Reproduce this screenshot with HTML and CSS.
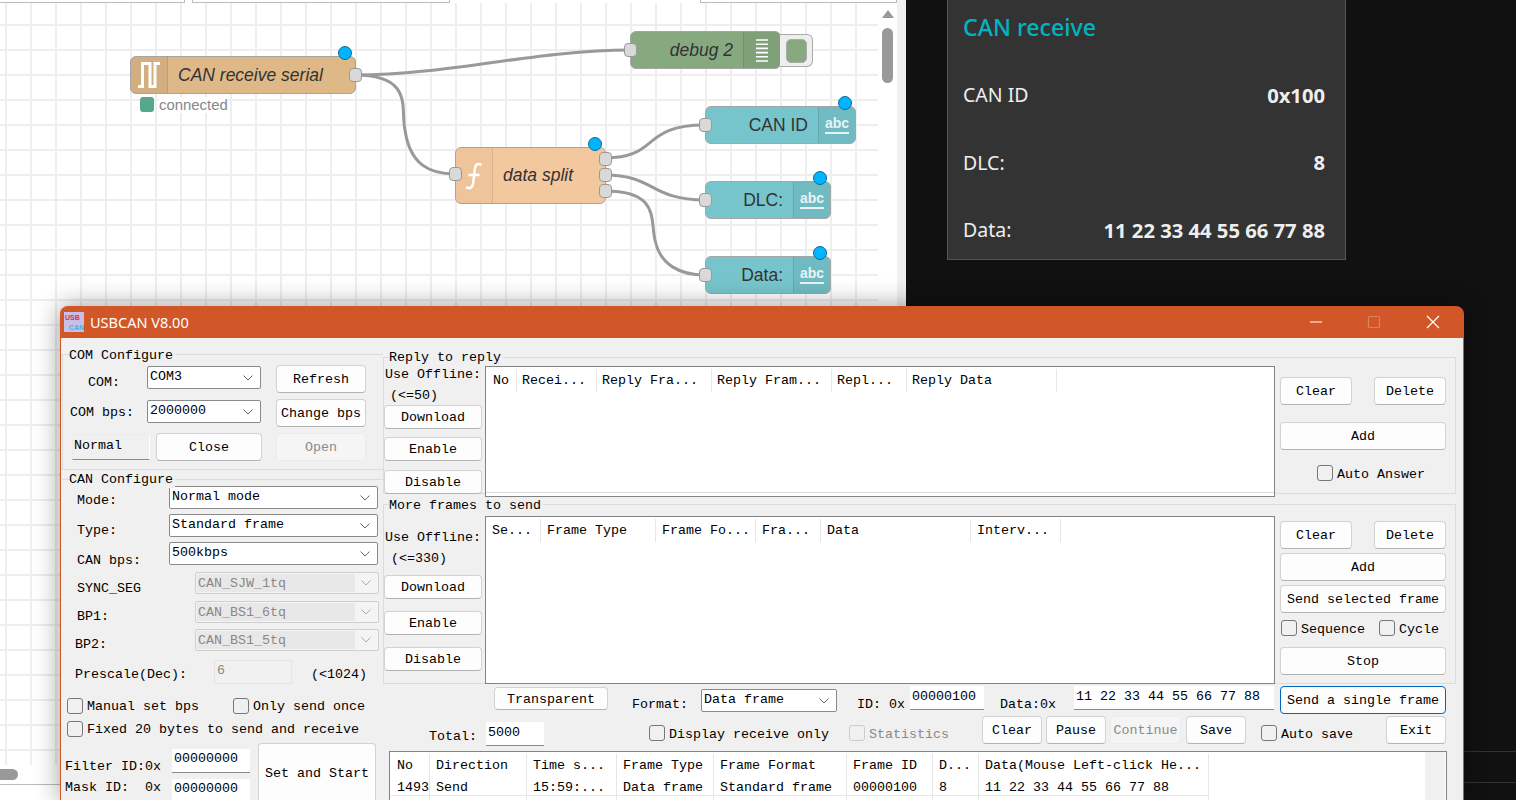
FILE: index.html
```html
<!DOCTYPE html>
<html lang="en">
<head>
<meta charset="utf-8">
<title>USBCAN V8.00</title>
<link rel="stylesheet" href="styles.css">
</head>
<body>
<div class="desktop">

  <div class="browser">
    <div class="tabs"><span class="tab tab-0"></span><span class="tab tab-a"></span><span class="tab tab-b"></span></div>
    <div class="canvas"></div>
    <svg class="wires" width="897" height="320" viewBox="0 0 897 320">
      <path d="M355 75C450 75 535 50 630 50"/>
      <path d="M355 75C415 75 400 110 405 130C410 165 430 174 455 174"/>
      <path d="M605 158C660 158 640 125 705 125"/>
      <path d="M605 175C655 175 650 200 705 200"/>
      <path d="M605 191C660 191 650 220 655 240C660 265 680 275 705 275"/>
    </svg>

    <div class="node n-serial">
      <div class="n-icon n-icon-l">
        <svg width="24" height="26" viewBox="0 0 24 26"><path class="ico ico-bold" d="M1 24.500h4.500V1.500h7.500v23h5V1.500H23"/></svg>
      </div>
      <div class="n-label it">CAN receive serial</div>
      <i class="port port-out"></i><i class="dot"></i>
    </div>
    <div class="status"><i class="status-box"></i><span class="status-text">connected</span></div>

    <div class="node n-func">
      <div class="n-icon n-icon-l">
        <svg width="18" height="28" viewBox="0 0 18 28"><path class="ico" d="M16.500 3C12.500 .8 10.500 2.500 9.900 6.500L8.100 21.500C7.500 25.500 5 27 1 25.500M3.500 13h11"/></svg>
      </div>
      <div class="n-label it">data split</div>
      <i class="port port-in"></i>
      <i class="port port-o1"></i><i class="port port-o2"></i><i class="port port-o3"></i><i class="dot"></i>
    </div>

    <div class="node n-debug">
      <div class="n-label it n-end">debug 2</div>
      <div class="n-icon n-icon-r">
        <svg width="14" height="24" viewBox="0 0 14 24"><path class="ico thin" d="M1 2h12M1 6.200h12M1 10.400h12M1 14.600h12M1 18.800h12M1 23h12"/></svg>
      </div>
      <i class="port port-in"></i>
      <div class="debug-btn"><i class="debug-inner"></i></div>
    </div>

    <div class="node n-text n-canid">
      <div class="n-label n-end">CAN ID</div>
      <div class="n-icon n-icon-r"><span class="abc">abc</span></div>
      <i class="port port-in"></i><i class="dot"></i>
    </div>
    <div class="node n-text n-dlc">
      <div class="n-label n-end">DLC:</div>
      <div class="n-icon n-icon-r"><span class="abc">abc</span></div>
      <i class="port port-in"></i><i class="dot"></i>
    </div>
    <div class="node n-text n-data">
      <div class="n-label n-end">Data:</div>
      <div class="n-icon n-icon-r"><span class="abc">abc</span></div>
      <i class="port port-in"></i><i class="dot"></i>
    </div>

    <div class="vscroll">
      <svg width="14" height="10" viewBox="0 0 14 10"><path d="M7 1l6 8H1z"/></svg>
      <i class="vthumb"></i>
    </div>
    <div class="hscroll"><i class="hthumb"></i></div>
  </div>

  <div class="dash">
    <div class="dash-title">CAN receive</div>
    <div class="dash-row dash-first"><span>CAN ID</span><b>0x100</b></div>
    <div class="dash-row"><span>DLC:</span><b>8</b></div>
    <div class="dash-row"><span>Data:</span><b>11 22 33 44 55 66 77 88</b></div>
  </div>

  <i class="dark-line dl-1"></i><i class="dark-line dl-2"></i>

  <div class="win">
    <div class="titlebar">
      <div class="app-icon"><span class="ai-usb">USB</span><span class="ai-can">CAN</span></div>
      <div class="app-title">USBCAN V8.00</div>
      <svg class="tb-ctl tb-min" width="14" height="14" viewBox="0 0 14 14"><path d="M1 7h12"/></svg>
      <svg class="tb-ctl tb-max" width="14" height="14" viewBox="0 0 14 14"><rect x="1.500" y="1.500" width="11" height="11" rx="1"/></svg>
      <svg class="tb-ctl tb-close" width="14" height="14" viewBox="0 0 14 14"><path d="M1 1l12 12M13 1L1 13"/></svg>
    </div>

    <div class="win-body">

      <div class="left">
        <section class="grp com-grp">
          <div class="legend">COM Configure</div>
          <div class="row com-row">
            <div class="lbl com-lbl dn3">COM:</div>
            <div class="combo w114"><span>COM3</span><svg class="chev" viewBox="0 0 10 6"><path d="M.5.500 5 5 9.500.500"/></svg></div>
            <button class="btn w90 h28 ml15">Refresh</button>
          </div>
          <div class="row com-row">
            <div class="lbl com-lbl2">COM bps:</div>
            <div class="combo w114"><span>2000000</span><svg class="chev" viewBox="0 0 10 6"><path d="M.5.500 5 5 9.500.500"/></svg></div>
            <button class="btn w90 h28 ml15">Change bps</button>
          </div>
          <div class="row com-row">
            <div class="normal">Normal</div>
            <button class="btn close-btn h28">Close</button>
            <button class="btn w90 h28 dis ml14">Open</button>
          </div>
        </section>

        <section class="can-grp">
          <div class="legend">CAN Configure</div>
          <div class="can-grid">
            <div class="lbl can-lbl">Mode:</div>
            <div class="combo wide"><span>Normal mode</span><svg class="chev" viewBox="0 0 10 6"><path d="M.5.500 5 5 9.500.500"/></svg></div>
            <div class="lbl can-lbl dn2">Type:</div>
            <div class="combo wide"><span>Standard frame</span><svg class="chev" viewBox="0 0 10 6"><path d="M.5.500 5 5 9.500.500"/></svg></div>
            <div class="lbl can-lbl dn4">CAN bps:</div>
            <div class="combo wide"><span>500kbps</span><svg class="chev" viewBox="0 0 10 6"><path d="M.5.500 5 5 9.500.500"/></svg></div>
            <div class="lbl can-lbl dn2">SYNC_SEG</div>
            <div class="combo narrow"><span>CAN_SJW_1tq</span><svg class="chev" viewBox="0 0 10 6"><path d="M.5.500 5 5 9.500.500"/></svg></div>
            <div class="lbl can-lbl dn1">BP1:</div>
            <div class="combo narrow"><span>CAN_BS1_6tq</span><svg class="chev" viewBox="0 0 10 6"><path d="M.5.500 5 5 9.500.500"/></svg></div>
            <div class="lbl can-lbl can-lbl2 dn1">BP2:</div>
            <div class="combo narrow"><span>CAN_BS1_5tq</span><svg class="chev" viewBox="0 0 10 6"><path d="M.5.500 5 5 9.500.500"/></svg></div>
            <div class="presc">
              <div class="lbl presc-lbl">Prescale(Dec):</div>
              <div class="input presc-in dis-in">6</div>
              <div class="lbl presc-max">(&lt;1024)</div>
            </div>
          </div>
        </section>

        <div class="chk-row chk-first">
          <i class="cb"></i><span class="cb-l">Manual set bps</span>
          <i class="cb ml34"></i><span class="cb-l">Only send once</span>
        </div>
        <div class="chk-row chk-second">
          <i class="cb"></i><span class="cb-l">Fixed 20 bytes to send and receive</span>
        </div>

        <div class="filter">
          <div class="filter-lbls">
            <div class="lbl">Filter ID:0x</div>
            <div class="lbl mask-lbl">Mask ID:&nbsp;&nbsp;0x</div>
          </div>
          <div class="filter-ins">
            <div class="input filter-in">00000000</div>
            <div class="input filter-in">00000000</div>
          </div>
          <button class="btn start-btn">Set and Start</button>
        </div>
      </div>

      <div class="main">
        <section class="rgrp reply-grp">
          <div class="legend">Reply to reply</div>
          <div class="tools tools-a">
            <div class="lbl off1">Use Offline:</div>
            <div class="lbl off2">(&lt;=50)</div>
            <button class="btn tool mt2">Download</button>
            <button class="btn tool mt8">Enable</button>
            <button class="btn tool mt9">Disable</button>
          </div>
          <div class="tbl tbl-a">
            <div class="thead cols-a">
              <div class="hc hc-first">No</div><div class="hc">Recei...</div><div class="hc">Reply Fra...</div><div class="hc">Reply Fram...</div><div class="hc">Repl...</div><div class="hc">Reply Data</div>
            </div>
          </div>
          <div class="acts acts-a">
            <div class="pair"><button class="btn w72 h28">Clear</button><button class="btn w72 h28">Delete</button></div>
            <button class="btn full mt17">Add</button>
            <div class="chk-row auto-ans"><i class="cb"></i><span class="cb-l">Auto Answer</span></div>
          </div>
        </section>

        <section class="rgrp more-grp">
          <div class="legend legend-more">More frames to send</div>
          <div class="tools tools-b">
            <div class="lbl off1">Use Offline:</div>
            <div class="lbl off2 off2b">(&lt;=330)</div>
            <button class="btn tool mt9">Download</button>
            <button class="btn tool mt12">Enable</button>
            <button class="btn tool mt12">Disable</button>
          </div>
          <div class="tbl tbl-b">
            <div class="thead cols-b">
              <div class="hc hc-first">Se...</div><div class="hc">Frame Type</div><div class="hc">Frame Fo...</div><div class="hc">Fra...</div><div class="hc">Data</div><div class="hc">Interv...</div>
            </div>
          </div>
          <div class="acts acts-b">
            <div class="pair"><button class="btn w72 h28">Clear</button><button class="btn w72 h28">Delete</button></div>
            <button class="btn full mt4">Add</button>
            <button class="btn full mt4">Send selected frame</button>
            <div class="chk-row seq-row"><i class="cb"></i><span class="cb-l">Sequence</span><i class="cb ml14b"></i><span class="cb-l">Cycle</span></div>
            <button class="btn full mt11">Stop</button>
          </div>
        </section>

        <div class="ctl-row ctl-a">
          <button class="btn transp">Transparent</button>
          <div class="lbl fmt-lbl">Format:</div>
          <div class="combo fmt-combo"><span>Data frame</span><svg class="chev" viewBox="0 0 10 6"><path d="M.5.500 5 5 9.500.500"/></svg></div>
          <div class="lbl id-lbl">ID: 0x</div>
          <div class="input id-in">00000100</div>
          <div class="lbl data-lbl">Data:0x</div>
          <div class="input data-in">11 22 33 44 55 66 77 88</div>
          <button class="btn send-one">Send a single frame</button>
        </div>

        <div class="ctl-row ctl-b">
          <div class="lbl total-lbl">Total:</div>
          <div class="input total-in">5000</div>
          <div class="chk-inline disp"><i class="cb"></i><span class="cb-l">Display receive only</span></div>
          <div class="chk-inline stat"><i class="cb cb-dis"></i><span class="cb-l gray">Statistics</span></div>
          <button class="btn w60 h28 ml33">Clear</button>
          <button class="btn w60 h28 ml4">Pause</button>
          <button class="btn w71 h28 ml4 dis">Continue</button>
          <button class="btn w60 h28 ml5">Save</button>
          <div class="chk-inline autosave"><i class="cb"></i><span class="cb-l">Auto save</span></div>
          <button class="btn w60 h28 ml33">Exit</button>
        </div>

        <div class="log">
          <div class="log-main">
            <div class="thead cols-c">
              <div class="hc hc-first">No</div><div class="hc">Direction</div><div class="hc">Time s...</div><div class="hc">Frame Type</div><div class="hc">Frame Format</div><div class="hc">Frame ID</div><div class="hc">D...</div><div class="hc">Data(Mouse Left-click He...</div>
            </div>
            <div class="trow cols-c">
              <div class="tc hc-first">1493</div><div class="tc">Send</div><div class="tc">15:59:...</div><div class="tc">Data frame</div><div class="tc">Standard frame</div><div class="tc">00000100</div><div class="tc">8</div><div class="tc">11 22 33 44 55 66 77 88</div>
            </div>
            <div class="trow cols-c">
              <div class="tc"></div><div class="tc"></div><div class="tc"></div><div class="tc"></div><div class="tc"></div><div class="tc"></div><div class="tc"></div><div class="tc"></div>
            </div>
          </div>
          <div class="log-scroll"></div>
        </div>
      </div>
    </div>
  </div>
</div>
</body>
</html>
```

FILE: styles.css
```css
* { box-sizing: border-box; }
html, body { margin: 0; padding: 0; }
body { width: 1516px; height: 800px; overflow: hidden; background: #111; }
i { display: block; font-style: normal; }

.desktop { position: relative; width: 1516px; height: 800px; overflow: hidden; background: #111; }

/* ---------- Browser with flow editor ---------- */
.browser { position: absolute; left: 0; top: 0; width: 906px; height: 800px; background: #fff; border-right: 9px solid #f0f0f0; font-family: "Liberation Sans", Arial, sans-serif; }
.tabs { display: flex; height: 3px; }
.tab { display: block; height: 3px; background: #fff; border: 1px solid #bbb; border-top: 0; }
.tab-0 { width: 185px; border-left: 0; }
.tab-a { margin-left: 7px; width: 258px; }
.tab-b { margin-left: 250px; width: 197px; }
.canvas { position: absolute; left: 0; top: 3px; width: 878px; height: 762px; background-color: #fff; background-image: linear-gradient(#eee 2px, transparent 2px), linear-gradient(90deg, #eee 2px, transparent 2px); background-size: 25px 25px; background-position: 5px 21px; }
.wires { position: absolute; left: 0; top: 0; }
.wires path { fill: none; stroke: #999; stroke-width: 3; }

.node { position: absolute; display: flex; height: 38px; border: 1px solid #a5a5a5; border-radius: 6px; color: #333; font-size: 17.500px; }
.n-serial { left: 130px; top: 56px; width: 226px; background: #deb887; }
.n-func { left: 455px; top: 147px; width: 151px; height: 57px; background: #f4c89e; }
.n-debug { left: 630px; top: 31px; width: 151px; background: #87a980; }
.n-text { background: #77c5cc; }
.n-canid { left: 705px; top: 106px; width: 151px; }
.n-dlc { left: 705px; top: 181px; width: 126px; }
.n-data { left: 705px; top: 256px; width: 126px; }

.n-icon { display: flex; align-items: center; justify-content: center; flex: none; width: 37px; background: rgba(0,0,0,.05); }
.n-func .n-icon { background: rgba(0,0,0,.015); }
.n-icon-l { border-right: 1px solid rgba(0,0,0,.1); border-radius: 5px 0 0 5px; }
.n-icon-r { border-left: 1px solid rgba(0,0,0,.1); border-radius: 0 5px 5px 0; }
.n-label { flex: 1; padding-left: 10px; line-height: 36px; white-space: nowrap; }
.n-func .n-label { line-height: 55px; }
.n-label.n-end { text-align: right; padding: 0 10px 0 0; }
.it { font-style: italic; }
.ico { fill: none; stroke: #fff; stroke-width: 2.500; }
.ico-bold { stroke-width: 3; }
.ico.thin { stroke-width: 1.600; }
.abc { display: block; font-size: 14px; font-weight: bold; line-height: 14px; color: #e6f4f5; border-bottom: 2px solid #e6f4f5; padding: 0 0 2px; }

.port { position: absolute; width: 13px; height: 14px; background: #d9d9d9; border: 1px solid #999; border-radius: 4px; }
.port-out { right: -7px; top: 11px; }
.port-in { left: -7px; top: 11px; }
.n-func .port-in { top: 19px; }
.port-o1 { right: -7px; top: 4px; }
.port-o2 { right: -7px; top: 20px; }
.port-o3 { right: -7px; top: 36px; }
.dot { position: absolute; right: 3px; top: -11px; width: 14px; height: 14px; border-radius: 50%; background: #00b4ff; border: 1px solid #0a6c99; }

.debug-btn { position: absolute; left: 149px; top: 2px; width: 33px; height: 33px; display: flex; align-items: center; justify-content: center; background: #eee; border: 1px solid #aaa; border-left: 0; border-radius: 0 6px 6px 0; }
.debug-inner { width: 21px; height: 24px; background: #87a980; border: 1px solid #aaa; border-radius: 5px; }

.status { position: absolute; left: 140px; top: 97px; display: flex; align-items: center; height: 15px; }
.status-box { width: 14px; height: 15px; border-radius: 3px; background: #55a98a; }
.status-text { margin-left: 5px; font-size: 14.900px; color: #888; background: #fff; }

.vscroll { position: absolute; left: 878px; top: 3px; width: 19px; height: 762px; background: #fff; display: flex; flex-direction: column; align-items: center; }
.vscroll svg { margin-top: 6px; flex: none; }
.vscroll path { fill: #999; }
.vthumb { width: 11px; height: 55px; margin-top: 9px; background: #999; border-radius: 6px; }
.hscroll { position: absolute; left: 0; top: 765px; width: 897px; height: 20px; background: #fff; border-bottom: 1px solid #bbb; }
.hthumb { width: 18px; height: 11px; margin-top: 4px; background: #999; border-radius: 0 6px 6px 0; }

/* ---------- Dashboard ---------- */
.dash { position: absolute; left: 947px; top: -1px; width: 399px; height: 261px; padding: 0 20px 0 15px; background: #333; border: 1px solid #555; font-family: "Noto Sans", "Open Sans", sans-serif; color: #eee; }
.dash-title { height: 54px; line-height: 54px; font-size: 23.200px; font-weight: 500; color: #00b5c1; }
.dash-row { display: flex; justify-content: space-between; align-items: center; height: 67.500px; font-size: 19.500px; }
.dash-row b { font-weight: 700; font-size: 20.200px; }
.dash-first { margin-top: 7px; }

.dark-line { position: absolute; left: 1464px; width: 52px; height: 1px; background: #333; }
.dl-1 { top: 751px; }
.dl-2 { top: 782px; }

/* ---------- USBCAN window ---------- */
.win { position: absolute; left: 60px; top: 306px; width: 1404px; height: 494px; overflow: hidden; background: #d25728; border-radius: 8px 8px 0 0; box-shadow: 0 0 26px rgba(0,0,0,.4); padding: 0 1px; }
.titlebar { display: flex; align-items: center; height: 32px; padding-right: 23px; color: #fff; }
.app-icon { flex: none; position: relative; width: 20px; height: 20px; margin: 0 0 0 3px; background: #c8bfe6; font: bold 7px/7px "Liberation Sans", sans-serif; }
.ai-usb { position: absolute; left: 1px; top: 2px; color: #e0303a; }
.ai-can { position: absolute; right: 0; bottom: 1px; color: #35b7e8; }
.app-title { margin-left: 6px; font: 14.500px "Noto Sans", "Open Sans", sans-serif; white-space: nowrap; }
.tb-ctl { flex: none; }
.tb-ctl path, .tb-ctl rect { fill: none; stroke: #fff; stroke-width: 1.200; }
.tb-min { margin-left: auto; }
.tb-max { margin-left: 44px; opacity: .25; }
.tb-close { margin-left: 45px; }

.win-body { display: flex; height: 462px; padding-left: 1px; background: #f0f0f0; color: #000; font: 13.330px/16px "Liberation Mono", "DejaVu Sans Mono", monospace; overflow: hidden; }

.left { flex: none; width: 321px; padding-top: 16px; }
.grp { position: relative; height: 116px; padding-top: 10px; border: 1px solid #dcdcdc; border-right: 0; }
.can-grp { position: relative; height: 205px; margin-top: 9px; padding-top: 6px; border-top: 1px solid #dcdcdc; }
.legend { position: absolute; left: 6px; top: -8px; background: #f0f0f0; padding-right: 2px; white-space: nowrap; }
.com-grp .legend { top: -7px; }
.can-grp .legend { left: 7px; }
.legend-more { top: -7px; }
.rgrp .legend { left: 5px; }

.row { display: flex; align-items: flex-start; }
.com-row { height: 28px; margin-bottom: 6px; }
.lbl { white-space: pre; flex: none; height: 16px; line-height: 18px; }
.com-lbl { width: 84px; padding-left: 25px; }
.com-lbl2 { width: 84px; padding-left: 7px; margin-top: 5px; }
.dn3 { margin-top: 9px; }

.combo { display: flex; align-items: center; justify-content: space-between; flex: none; height: 23px; margin-top: 1px; padding: 0 7px 0 2px; background: #fff; border: 1px solid #8a8a8a; border-radius: 2px; white-space: nowrap; }
.combo span { padding-bottom: 1px; }
.chev { flex: none; width: 10px; height: 6px; }
.chev path { fill: none; stroke: #666; stroke-width: 1; }
.w114 { width: 114px; }
.wide { grid-column: 2 / 4; width: 209px; margin-top: 0; }
.narrow { grid-column: 3; width: 184px; height: 22px; margin-top: 0; padding-left: 1px; background: #f4f4f4; border-color: #cfcfcf; color: #888; }
.combo.narrow span { display: block; width: 158px; height: 18px; padding: 0 0 0 1px; background: #e8e8e8; line-height: 19px; }
.narrow .chev path { stroke: #aaa; }

.btn { flex: none; display: block; padding: 2px 0 0; margin-left: 0; background: #fdfdfd; border: 1px solid #d2d2d2; border-bottom-color: #b3b3b3; border-radius: 4px; color: #000; font: inherit; white-space: nowrap; text-align: center; }
.btn.dis { background: #f5f5f5; border-color: #ececec; color: #8a8a8a; }
.w60 { width: 60px; }
.w71 { width: 71px; }
.w72 { width: 72px; }
.w90 { width: 90px; }
.h28 { height: 28px; }
.ml4 { margin-left: 4px; }
.ml5 { margin-left: 5px; }
.ml14 { margin-left: 14px; }
.ml15 { margin-left: 15px; }
.ml33 { margin-left: 33px; }
.mt2 { margin-top: 2px; }
.mt4 { margin-top: 4px; }
.mt8 { margin-top: 8px; }
.mt9 { margin-top: 9px; }
.mt11 { margin-top: 11px; }
.mt12 { margin-top: 12px; }
.mt17 { margin-top: 17px; }

.normal { flex: none; width: 78px; height: 26px; margin: 1px 0 0 9px; padding: 3px 0 0 1px; background: #f0f0f0; border: 1px solid #ececec; border-bottom-color: #8a8a8a; border-right-color: #fff; }
.close-btn { width: 106px; margin-left: 6px; }

.can-grid { display: grid; grid-template-columns: 107px 26px 184px; grid-template-rows: 28px 28px 30px 29px 28px 31px 24px; align-items: start; }
.can-lbl { grid-column: 1; padding-left: 15px; margin-top: 6px; }
.can-lbl.dn1 { margin-top: 7px; }
.can-lbl.dn2 { margin-top: 8px; }
.can-lbl.dn4 { margin-top: 10px; }
.can-lbl2 { padding-left: 13px; }
.presc { grid-column: 1 / -1; display: flex; }
.presc-lbl { padding-left: 13px; margin-top: 6px; }
.presc-in { width: 78px; height: 24px; margin-left: 27px; }
.presc-max { margin: 6px 0 0 19px; }

.input { flex: none; height: 24px; padding: 2px 0 0 2px; background: #fff; border-bottom: 1px solid #8a8a8a; white-space: pre; }
.dis-in { background: #f0f0f0; border: 1px solid #e4e4e4; color: #888; }

.chk-row { display: flex; align-items: center; height: 16px; }
.chk-first { margin-top: 14px; padding-left: 5px; }
.chk-second { margin-top: 7px; padding-left: 5px; }
.cb { flex: none; width: 16px; height: 16px; border: 1px solid #777; border-radius: 3px; }
.cb-dis { border-color: #ccc; }
.cb-l { margin-left: 4px; white-space: pre; height: 16px; line-height: 19px; }
.chk-first .cb-l, .chk-second .cb-l { line-height: 17px; }
.gray { color: #888; }
.ml34 { margin-left: 34px; }
.ml14b { margin-left: 14px; }

.filter { display: flex; margin-top: 6px; }
.filter-lbls { flex: none; width: 110px; padding: 15px 0 0 3px; }
.mask-lbl { margin-top: 5px; }
.filter-ins { flex: none; width: 78px; padding-top: 6px; }
.filter-in { margin-bottom: 6px; }
.start-btn { width: 118px; height: 68px; margin-left: 8px; padding: 0 0 6px; }

.main { flex: none; width: 1081px; padding-top: 19px; }
.rgrp { position: relative; display: flex; align-items: flex-start; width: 1073px; border: 1px solid #dcdcdc; }
.reply-grp { height: 137px; }
.more-grp { height: 180px; margin-top: 10px; }
.tools { flex: none; width: 98px; }
.tools-a { padding-top: 8px; }
.tools-b { padding-top: 24px; }
.off1 { padding-left: 1px; }
.off2 { padding-left: 6px; margin-top: 5px; }
.off2b { padding-left: 7px; }
.tool { width: 98px; height: 24px; }

.tbl { position: relative; flex: none; width: 790px; margin-left: 3px; padding-top: 2px; background: #fff; border: 1px solid #838383; }
.tbl-a { height: 131px; margin-top: 8px; }
.tbl-a::after { content: ""; position: absolute; left: 0; right: 0; bottom: 3px; height: 1px; background: #dcdcdc; }
.tbl-b { height: 168px; margin-top: 11px; }
.thead, .trow { display: grid; white-space: nowrap; }
.cols-a { grid-template-columns: 31px 80px 115px 120px 75px 150px; }
.cols-b { grid-template-columns: 55px 115px 100px 65px 150px 90px; }
.cols-c { grid-template-columns: 40px 97px 90px 97px 133px 86px 46px 230px; }
.hc { height: 23px; line-height: 23px; padding-left: 5px; border-right: 1px solid #e6e6e6; overflow: hidden; }
.hc-first { padding-left: 7px; }
.tc { height: 19px; line-height: 21px; padding-left: 6px; border-right: 1px solid #e6e6e6; border-bottom: 1px solid #e9e9e9; overflow: hidden; }
.cols-b .hc { padding-left: 6px; }
.cols-c .hc { padding-left: 6px; }
.cols-c .hc-first, .cols-c .tc.hc-first { padding-left: 7px; }

.acts { flex: none; width: 166px; margin-left: 5px; }
.acts-a { padding-top: 19px; }
.acts-b { padding-top: 16px; }
.pair { display: flex; justify-content: space-between; }
.full { width: 166px; height: 28px; }
.auto-ans { margin-top: 15px; padding-left: 37px; }
.seq-row { margin-top: 7px; padding-left: 1px; }

.ctl-row { display: flex; align-items: flex-start; }
.ctl-a { height: 30px; margin-top: 2px; padding-left: 111px; }
.ctl-b { height: 35px; padding-left: 46px; }
.transp { width: 114px; height: 23px; margin-top: 1px; }
.fmt-lbl { margin: 10px 0 0 24px; }
.fmt-combo { width: 136px; margin: 3px 0 0 13px; }
.id-lbl { margin: 10px 0 0 20px; }
.id-in { width: 74px; margin-left: 5px; padding-top: 3px; }
.data-lbl { margin: 10px 0 0 16px; }
.data-in { width: 200px; margin-left: 18px; padding-top: 3px; }
.send-one { width: 166px; height: 28px; margin-left: 6px; border: 1px solid #0067c0; }
.total-lbl { margin-top: 12px; }
.total-in { width: 58px; margin: 6px 0 0 9px; padding-top: 3px; }
.chk-inline { display: flex; align-items: center; flex: none; height: 16px; margin-top: 9px; }
.disp { margin-left: 105px; }
.stat { margin-left: 20px; }
.autosave { margin-left: 15px; }

.log { display: flex; width: 1058px; height: 60px; margin-left: 6px; background: #fff; border: 1px solid #838383; }
.log-main { flex: none; width: 1035px; padding-top: 2px; }
.log-scroll { flex: none; width: 20px; background: #f0f0f0; }
```
